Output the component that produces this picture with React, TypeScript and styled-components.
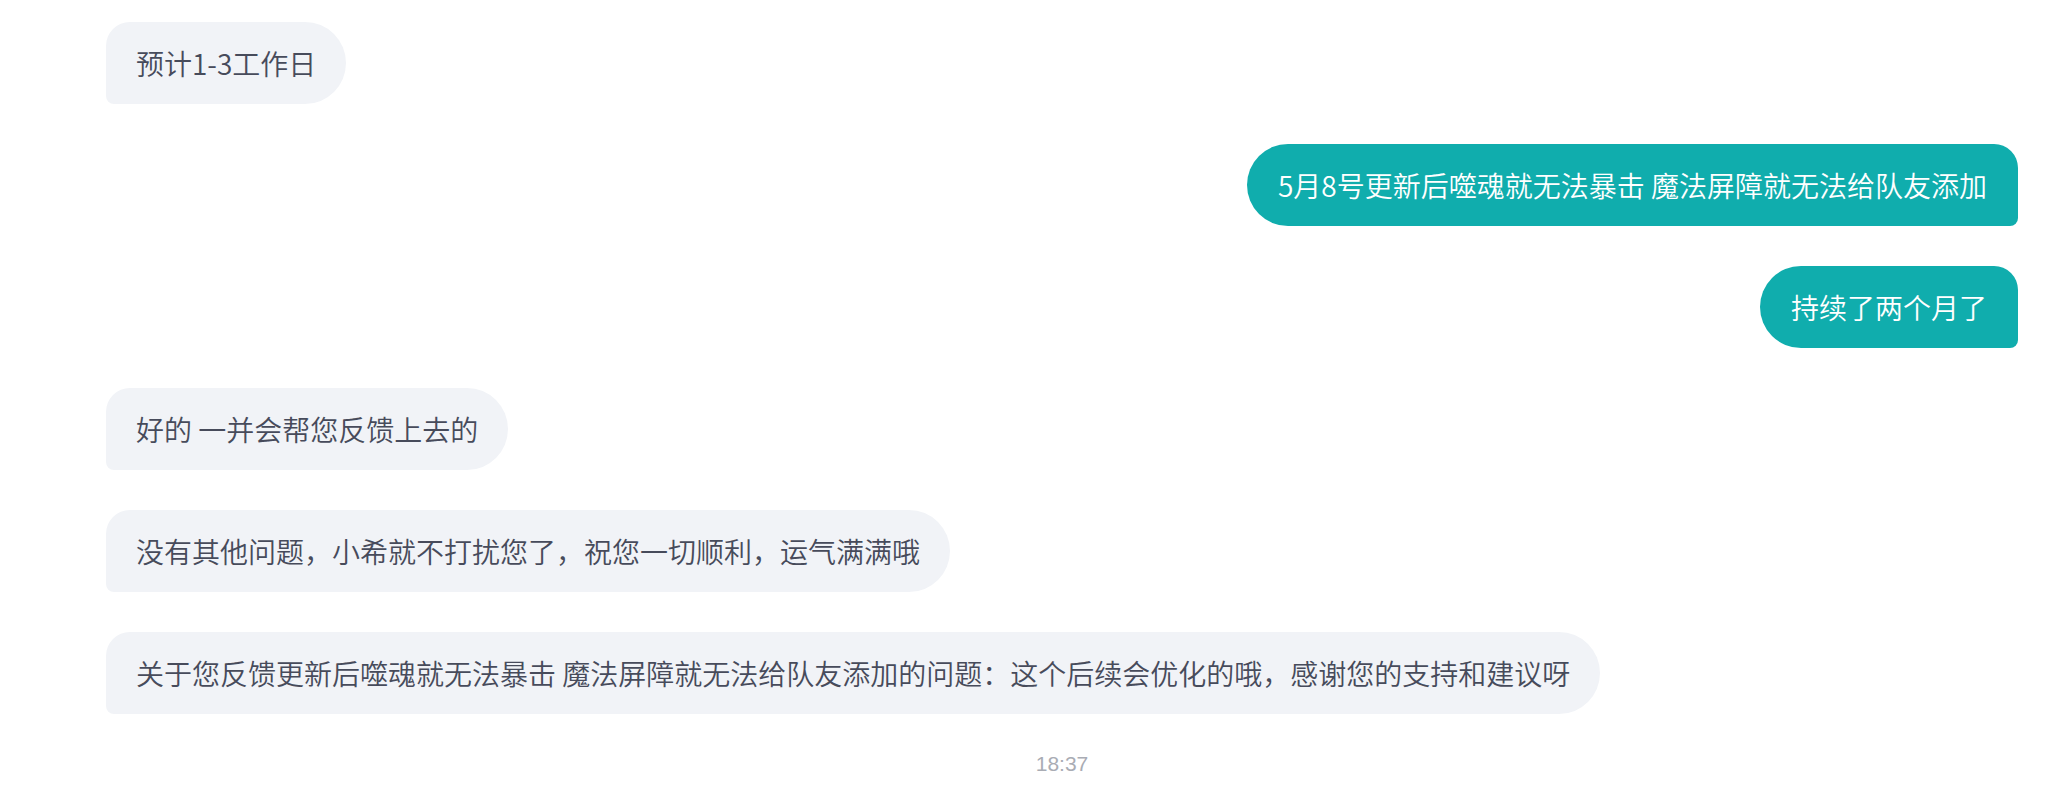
import React from "react";
import styled, { createGlobalStyle } from "styled-components";

const GlobalStyle = createGlobalStyle`
  html, body {
    margin: 0;
    padding: 0;
    background: #ffffff;
  }
  body {
    font-family: "PingFang SC", "Noto Sans CJK SC", "Noto Sans", sans-serif;
  }
`;

const Thread = styled.div`
  display: flex;
  flex-direction: column;
  gap: 40px;
  padding: 22px 30px 40px 106px;
`;

const Row = styled.div<{ $mine?: boolean }>`
  display: flex;
  justify-content: ${(p) => (p.$mine ? "flex-end" : "flex-start")};
`;

const Bubble = styled.div<{ $mine?: boolean }>`
  box-sizing: border-box;
  height: 82px;
  padding: 20px ${(p) => (p.$mine ? "31px" : "30px")};
  font-size: 28px;
  font-weight: 350;
  line-height: 42px;
  white-space: nowrap;
  font-family: "PingFang SC", "Noto Sans CJK SC", "Noto Sans", sans-serif;
  background: ${(p) => (p.$mine ? "#10adad" : "#f1f3f7")};
  color: ${(p) => (p.$mine ? "#ffffff" : "#474b5b")};
  border-radius: ${(p) => (p.$mine ? "41px 24px 8px 41px" : "24px 41px 41px 8px")};
`;

const Time = styled.div`
  text-align: center;
  font-family: "Liberation Sans", Arial, sans-serif;
  font-size: 21px;
  line-height: 20px;
  color: #a9acb4;
`;

type Msg = { text: string; mine?: boolean };

const messages: Msg[] = [
  { text: "预计1-3工作日" },
  { text: "5月8号更新后噬魂就无法暴击 魔法屏障就无法给队友添加", mine: true },
  { text: "持续了两个月了", mine: true },
  { text: "好的 一并会帮您反馈上去的" },
  { text: "没有其他问题，小希就不打扰您了，祝您一切顺利，运气满满哦" },
  {
    text: "关于您反馈更新后噬魂就无法暴击 魔法屏障就无法给队友添加的问题：这个后续会优化的哦，感谢您的支持和建议呀",
  },
];

export default function App() {
  return (
    <>
      <GlobalStyle />
      <Thread>
        {messages.map((m, i) => (
          <Row key={i} $mine={m.mine}>
            <Bubble $mine={m.mine}>{m.text}</Bubble>
          </Row>
        ))}
        <Time>18:37</Time>
      </Thread>
    </>
  );
}
